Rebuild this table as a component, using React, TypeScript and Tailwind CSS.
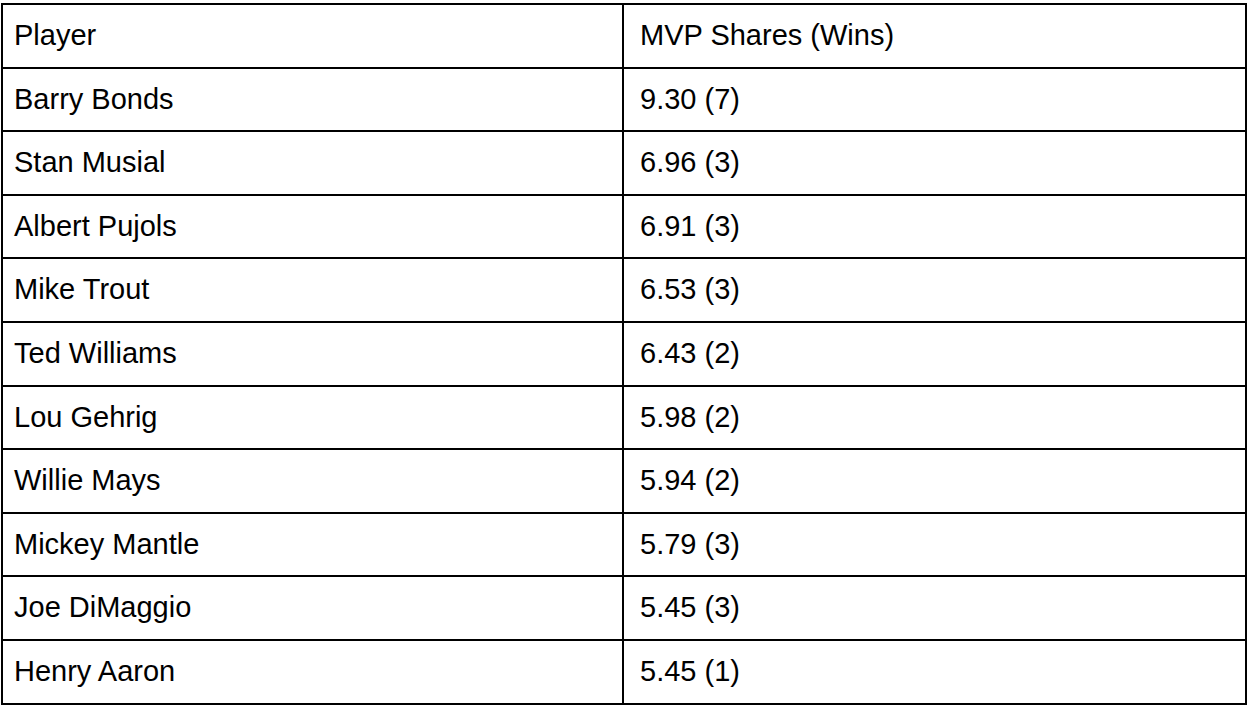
const rows: [string, string][] = [
  ["Player", "MVP Shares (Wins)"],
  ["Barry Bonds", "9.30 (7)"],
  ["Stan Musial", "6.96 (3)"],
  ["Albert Pujols", "6.91 (3)"],
  ["Mike Trout", "6.53 (3)"],
  ["Ted Williams", "6.43 (2)"],
  ["Lou Gehrig", "5.98 (2)"],
  ["Willie Mays", "5.94 (2)"],
  ["Mickey Mantle", "5.79 (3)"],
  ["Joe DiMaggio", "5.45 (3)"],
  ["Henry Aaron", "5.45 (1)"],
];

export default function App() {
  return (
    <div className="h-[710px] w-[1250px] bg-white pt-[3px] pl-px font-['Liberation_Sans',Arial,sans-serif] text-[29px] text-black">
      <div className="w-[1246px] border-2 border-black">
        {rows.map(([player, shares], i) => (
          <div
            key={player}
            className={`grid grid-cols-[619px_1fr] ${i > 0 ? "h-[63.6px] border-t-2 border-black" : "h-[61.6px]"}`}
          >
            <div className="flex items-center pl-[11px]">{player}</div>
            <div className="flex items-center border-l-2 border-black pl-4">{shares}</div>
          </div>
        ))}
      </div>
    </div>
  );
}
